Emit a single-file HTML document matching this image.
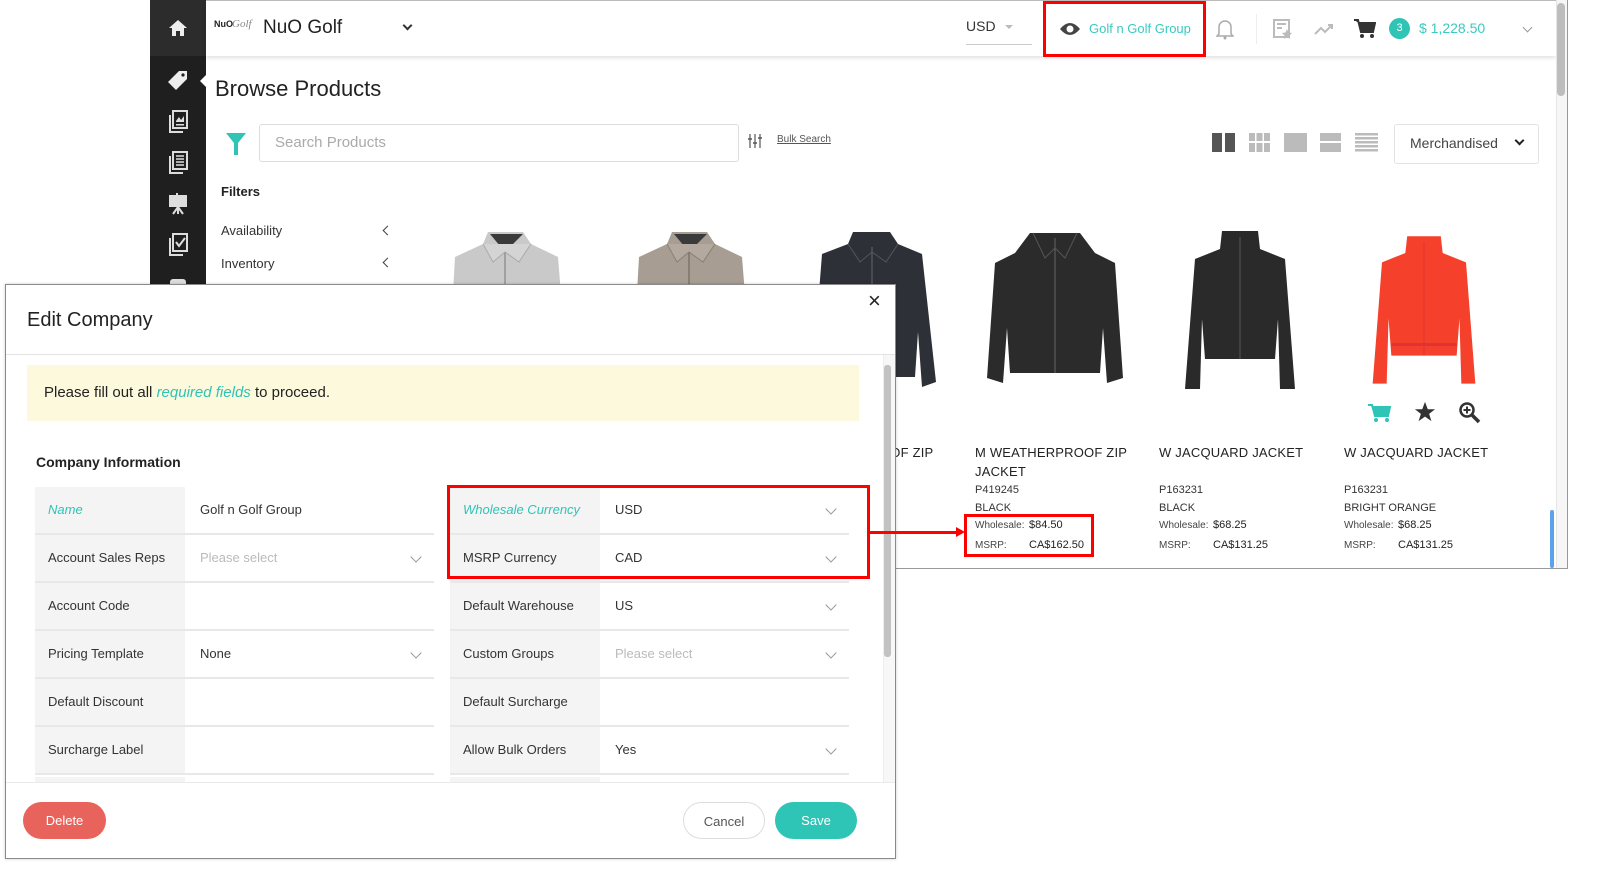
<!DOCTYPE html>
<html><head><meta charset="utf-8"><style>
*{box-sizing:border-box;margin:0;padding:0}
body{width:1600px;height:880px;background:#fff;font-family:"Liberation Sans",sans-serif;position:relative;overflow:hidden;color:#222}
.abs{position:absolute}
.side{left:150px;top:0;width:56px;height:568px;background:#1f1f1f}
.sidetop{left:150px;top:0;width:56px;height:56px;background:#2c2c2c}
.hdr{left:206px;top:0;width:1350px;height:56px;background:#fff;box-shadow:0 2px 4px rgba(0,0,0,.12);border-top:1px solid #bbb}
.t{position:absolute;white-space:nowrap}
.pt{font-size:13px;color:#222;letter-spacing:.2px}
.sm{font-size:10px;color:#444}
.row{position:absolute;height:48px;border-bottom:2px solid #e8e8e8}
.lab{position:absolute;left:0;top:0;width:150px;height:46px;background:#f4f4f4;font-size:13px;color:#333;padding-left:13px;line-height:46px}
.val{position:absolute;left:165px;top:0;font-size:13px;color:#333;line-height:46px}
.chev{position:absolute;right:14px;top:18px;width:8px;height:8px;border-right:1.3px solid #999;border-bottom:1.3px solid #999;transform:rotate(45deg)}
.ph{color:#bbb}
</style></head><body>
<div class="abs side"></div>
<div class="abs sidetop"></div>
<svg class="abs" style="left:168px;top:18px" width="20" height="20" viewBox="0 0 20 20"><path d="M10 2 L19 10 H16 V18 H12 V13 H8 V18 H4 V10 H1 Z" fill="#eee"/></svg>
<div class="abs" style="left:200px;top:74px;width:0;height:0;border-top:7px solid transparent;border-bottom:7px solid transparent;border-right:7px solid #fff"></div>
<svg class="abs" style="left:167px;top:69px" width="22" height="22" viewBox="0 0 22 22"><path d="M12 2 H20 V10 L9 21 L1 13 Z" fill="#eee"/><circle cx="16" cy="6" r="1.6" fill="#1f1f1f"/></svg>
<svg class="abs" style="left:167px;top:110px" width="22" height="24" viewBox="0 0 22 24"><rect x="6" y="1" width="14" height="17" fill="none" stroke="#ddd" stroke-width="2"/><path d="M3 5 V22 H16" fill="none" stroke="#ddd" stroke-width="2"/><path d="M9 11 L12 7 L14 10 L17 6 V12 H9Z" fill="#ddd"/><rect x="9" y="14" width="8" height="1.5" fill="#ddd"/></svg>
<svg class="abs" style="left:167px;top:151px" width="22" height="24" viewBox="0 0 22 24"><rect x="6" y="1" width="14" height="17" fill="none" stroke="#ddd" stroke-width="2"/><path d="M3 5 V22 H16" fill="none" stroke="#ddd" stroke-width="2"/><path d="M9 5h8M9 8h8M9 11h8M9 14h8" stroke="#ddd" stroke-width="1.5"/></svg>
<svg class="abs" style="left:167px;top:193px" width="22" height="22" viewBox="0 0 22 22"><rect x="2" y="2" width="18" height="12" fill="#ddd"/><path d="M11 14 L6 21 M11 14 L16 21 M11 14 V21 M10 0 V2" stroke="#ddd" stroke-width="2"/></svg>
<svg class="abs" style="left:167px;top:233px" width="22" height="24" viewBox="0 0 22 24"><rect x="6" y="1" width="14" height="17" fill="none" stroke="#ddd" stroke-width="2"/><path d="M3 5 V22 H16" fill="none" stroke="#ddd" stroke-width="2"/><path d="M9 9 L12 13 L18 5" fill="none" stroke="#ddd" stroke-width="2"/></svg>
<div class="abs" style="left:170px;top:279px;width:16px;height:6px;background:#ddd;border-radius:3px 3px 0 0"></div>

<div class="abs hdr"></div>
<div class="t" style="left:214px;top:19px;font-size:9px;font-weight:bold">NuO</div>
<div class="t" style="left:232px;top:18px;font-size:11px;font-style:italic;color:#888;font-family:'Liberation Serif',serif">Golf</div>
<div class="t" style="left:263px;top:17px;font-size:19px;color:#222">NuO Golf</div>
<div class="abs" style="left:404px;top:22px;width:7px;height:7px;border-right:2px solid #333;border-bottom:2px solid #333;transform:rotate(45deg)"></div>
<div class="t" style="left:966px;top:18px;font-size:14px;color:#333">USD</div>
<div class="abs" style="left:1005px;top:25px;border-left:4px solid transparent;border-right:4px solid transparent;border-top:4px solid #bbb"></div>
<div class="abs" style="left:966px;top:44px;width:66px;height:1px;background:#ccc"></div>
<div class="abs" style="left:1043px;top:1px;width:163px;height:56px;border:3px solid #f00"></div>
<svg class="abs" style="left:1059px;top:21px" width="22" height="16" viewBox="0 0 22 16"><path d="M1 8 Q11 -4 21 8 Q11 20 1 8Z" fill="#444"/><circle cx="11" cy="8" r="3.5" fill="#fff"/></svg>
<div class="t" style="left:1089px;top:21px;font-size:13px;color:#3cc9c0">Golf n Golf Group</div>
<svg class="abs" style="left:1216px;top:18px" width="18" height="22" viewBox="0 0 18 22"><path d="M3 16 V9 A6 6 0 0 1 15 9 V16 L17 18 H1 Z" fill="none" stroke="#aaa" stroke-width="1.5"/><circle cx="9" cy="20" r="1.5" fill="#aaa"/></svg>
<div class="abs" style="left:1256px;top:14px;width:1px;height:30px;background:#eee"></div>
<svg class="abs" style="left:1273px;top:19px" width="20" height="20" viewBox="0 0 20 20"><rect x="1" y="1" width="15" height="17" fill="none" stroke="#bbb" stroke-width="2"/><path d="M4 5h9M4 9h5" stroke="#bbb" stroke-width="2"/><path d="M14 10 L15.5 13.5 L19 14 L16.5 16.5 L17 20 L14 18 L11 20 L11.5 16.5 L9 14 L12.5 13.5Z" fill="#bbb"/></svg>
<svg class="abs" style="left:1314px;top:22px" width="20" height="14" viewBox="0 0 20 14"><path d="M1 12 L7 6 L11 10 L18 3 M14 3 H18 V7" fill="none" stroke="#bbb" stroke-width="2"/></svg>
<svg class="abs" style="left:1354px;top:18px" width="22" height="22" viewBox="0 0 22 22"><path d="M0 2 H4 L7 14 H19 L21 5 H5" fill="#333" stroke="#333" stroke-width="2"/><circle cx="8" cy="18" r="2" fill="#333"/><circle cx="18" cy="18" r="2" fill="#333"/></svg>
<div class="abs" style="left:1389px;top:18px;width:21px;height:21px;border-radius:50%;background:#2ec4b6;color:#fff;font-size:11px;text-align:center;line-height:21px">3</div>
<div class="t" style="left:1419px;top:20px;font-size:14px;color:#3cc9c0">$ 1,228.50</div>
<div class="abs" style="left:1524px;top:24px;width:7px;height:7px;border-right:1.3px solid #999;border-bottom:1.3px solid #999;transform:rotate(45deg)"></div>
<div class="abs" style="left:1556px;top:0;width:12px;height:568px;background:#f6f6f6;border-left:1px solid #e6e6e6"></div>
<div class="abs" style="left:1557px;top:3px;width:8px;height:93px;background:#bdbdbd;border-radius:4px"></div>
<div class="abs" style="left:1550px;top:510px;width:4px;height:58px;background:#5aa2ea;border-radius:2px"></div>
<div class="abs" style="left:1567px;top:0;width:1px;height:568px;background:#999"></div>
<div class="abs" style="left:895px;top:568px;width:673px;height:1px;background:#999"></div>

<div class="t" style="left:215px;top:76px;font-size:22px;color:#222">Browse Products</div>
<svg class="abs" style="left:225px;top:132px" width="22" height="24" viewBox="0 0 22 24"><path d="M1 1 H21 L13 11 V23 H9 V11 Z" fill="#2ec4b6"/></svg>
<div class="abs" style="left:259px;top:124px;width:480px;height:38px;border:1px solid #ddd;border-radius:3px"></div>
<div class="t" style="left:275px;top:134px;font-size:15px;color:#aaa">Search Products</div>
<svg class="abs" style="left:748px;top:134px" width="14" height="14" viewBox="0 0 14 14"><path d="M2 0V14M7 0V14M12 0V14" stroke="#555" stroke-width="1.2"/><path d="M0 5h4M5 9h4M10 4h4" stroke="#555" stroke-width="1.5"/></svg>
<div class="t" style="left:777px;top:134px;font-size:10px;color:#555;text-decoration:underline">Bulk Search</div>
<div class="abs" style="left:1212px;top:133px;width:10px;height:19px;background:#555"></div>
<div class="abs" style="left:1225px;top:133px;width:10px;height:19px;background:#555"></div>
<svg class="abs" style="left:1249px;top:133px" width="21" height="19"><g fill="#bbb"><rect x="0" y="0" width="6" height="8"/><rect x="7.5" y="0" width="6" height="8"/><rect x="15" y="0" width="6" height="8"/><rect x="0" y="10" width="6" height="9"/><rect x="7.5" y="10" width="6" height="9"/><rect x="15" y="10" width="6" height="9"/></g></svg>
<div class="abs" style="left:1284px;top:133px;width:23px;height:19px;background:#bbb"></div>
<div class="abs" style="left:1320px;top:133px;width:21px;height:8px;background:#bbb"></div>
<div class="abs" style="left:1320px;top:143px;width:21px;height:9px;background:#bbb"></div>
<svg class="abs" style="left:1355px;top:133px" width="23" height="19"><g fill="#bbb"><rect y="0" width="23" height="2.5"/><rect y="4" width="23" height="2.5"/><rect y="8" width="23" height="2.5"/><rect y="12" width="23" height="2.5"/><rect y="16" width="23" height="2.5"/></g></svg>
<div class="abs" style="left:1394px;top:124px;width:145px;height:40px;border:1px solid #e2e2e2;border-radius:3px"></div>
<div class="t" style="left:1410px;top:135px;font-size:14px;color:#444">Merchandised</div>
<div class="abs" style="left:1516px;top:137px;width:7px;height:7px;border-right:2px solid #222;border-bottom:2px solid #222;transform:rotate(45deg)"></div>

<div class="t" style="left:221px;top:184px;font-size:13px;color:#222;font-weight:bold">Filters</div>
<div class="t" style="left:221px;top:223px;font-size:13px;color:#333">Availability</div>
<div class="t" style="left:221px;top:256px;font-size:13px;color:#333">Inventory</div>
<div class="abs" style="left:384px;top:227px;width:7px;height:7px;border-left:1.5px solid #444;border-bottom:1.5px solid #444;transform:rotate(45deg)"></div>
<div class="abs" style="left:384px;top:259px;width:7px;height:7px;border-left:1.5px solid #444;border-bottom:1.5px solid #444;transform:rotate(45deg)"></div>

<svg class="abs" style="left:443px;top:232px" width="130" height="160" viewBox="0 0 130 160"><path d="M45 0 L80 0 L88 12 L115 25 L125 150 H5 L12 25 L40 12Z" fill="#c9c9c9"/><path d="M62 15 V160" stroke="#777"/><path d="M47 2 L62 20 L80 2Z" fill="#3a3a3a"/><path d="M40 12 L50 30 L62 20 L76 30 L88 12" fill="#d4d4d4" stroke="#aaa"/></svg>
<svg class="abs" style="left:627px;top:232px" width="130" height="160" viewBox="0 0 130 160"><path d="M45 0 L80 0 L88 12 L115 25 L125 150 H5 L12 25 L40 12Z" fill="#a79d92"/><path d="M62 15 V160" stroke="#6b5f50"/><path d="M47 2 L62 20 L80 2Z" fill="#3a3a3a"/><path d="M40 12 L50 30 L62 20 L76 30 L88 12" fill="#b3a99e" stroke="#8a7f72"/></svg>
<svg class="abs" style="left:810px;top:232px" width="128" height="160" viewBox="0 0 128 160"><path d="M43 0 L80 0 L88 12 L112 22 L126 150 L112 155 L108 100 L105 145 L20 145 L18 100 L14 155 L2 150 L12 22 L38 12Z" fill="#2e3038"/><path d="M62 15 V145" stroke="#666"/><path d="M38 12 L50 30 L62 20 L76 30 L88 12" fill="none" stroke="#555"/></svg>
<svg class="abs" style="left:985px;top:228px" width="140" height="160" viewBox="0 0 140 160"><path d="M45 5 L95 5 L110 25 L130 35 L138 150 L122 155 L118 100 L115 145 L25 145 L22 100 L18 155 L2 150 L10 35 L30 25Z" fill="#2b2b2b"/><path d="M70 10 V145" stroke="#666"/><path d="M48 5 L60 30 L70 20 L80 30 L92 5" fill="none" stroke="#555"/></svg>
<svg class="abs" style="left:1180px;top:228px" width="120" height="162" viewBox="0 0 120 160"><path d="M42 2 L78 2 L80 20 L105 30 L115 160 L100 160 L98 90 L95 130 L25 130 L22 90 L20 160 L5 160 L15 30 L40 20Z" fill="#2a2a2a"/><path d="M60 8 V130" stroke="#555"/></svg>
<svg class="abs" style="left:1368px;top:228px" width="112" height="162" viewBox="0 0 120 160"><path d="M42 2 L78 2 L80 20 L105 30 L115 160 L100 160 L98 90 L95 130 L25 130 L22 90 L20 160 L5 160 L15 30 L40 20Z" fill="#f5412c"/><path d="M60 8 V130" stroke="#d33"/><path d="M25 118 H95" stroke="#d33" stroke-width="3"/></svg>
<svg class="abs" style="left:1368px;top:403px" width="24" height="20" viewBox="0 0 24 20"><path d="M0 2 H4 L7 13 H20 L22 4 H5" fill="#2ec4b6" stroke="#2ec4b6" stroke-width="2"/><circle cx="8" cy="17" r="2" fill="#2ec4b6"/><circle cx="19" cy="17" r="2" fill="#2ec4b6"/></svg>
<svg class="abs" style="left:1413px;top:401px" width="24" height="22" viewBox="0 0 24 24"><path d="M12 1 L15 9 H23 L16.5 14 L19 22 L12 17 L5 22 L7.5 14 L1 9 H9Z" fill="#333"/></svg>
<svg class="abs" style="left:1459px;top:402px" width="22" height="22" viewBox="0 0 22 22"><circle cx="8" cy="8" r="6.5" fill="none" stroke="#333" stroke-width="2.5"/><path d="M13 13 L20 20" stroke="#333" stroke-width="3.5"/><path d="M8 4.5V11.5M4.5 8H11.5" stroke="#333" stroke-width="2"/></svg>

<div class="t pt" style="left:880px;top:445px">OOF ZIP</div>
<div class="t pt" style="left:975px;top:445px">M WEATHERPROOF ZIP</div>
<div class="t pt" style="left:975px;top:464px">JACKET</div>
<div class="t" style="left:975px;top:484px;font-size:11px;color:#333">P419245</div>
<div class="t" style="left:975px;top:502px;font-size:11px;color:#333">BLACK</div>
<div class="t sm" style="left:975px;top:520px">Wholesale:</div><div class="t" style="left:1029px;top:519px;font-size:11px;color:#222">$84.50</div>
<div class="t sm" style="left:975px;top:540px">MSRP:</div><div class="t" style="left:1029px;top:539px;font-size:11px;color:#222">CA$162.50</div>
<div class="t pt" style="left:1159px;top:445px">W JACQUARD JACKET</div>
<div class="t" style="left:1159px;top:484px;font-size:11px;color:#333">P163231</div>
<div class="t" style="left:1159px;top:502px;font-size:11px;color:#333">BLACK</div>
<div class="t sm" style="left:1159px;top:520px">Wholesale:</div><div class="t" style="left:1213px;top:519px;font-size:11px;color:#222">$68.25</div>
<div class="t sm" style="left:1159px;top:540px">MSRP:</div><div class="t" style="left:1213px;top:539px;font-size:11px;color:#222">CA$131.25</div>
<div class="t pt" style="left:1344px;top:445px">W JACQUARD JACKET</div>
<div class="t" style="left:1344px;top:484px;font-size:11px;color:#333">P163231</div>
<div class="t" style="left:1344px;top:502px;font-size:11px;color:#333">BRIGHT ORANGE</div>
<div class="t sm" style="left:1344px;top:520px">Wholesale:</div><div class="t" style="left:1398px;top:519px;font-size:11px;color:#222">$68.25</div>
<div class="t sm" style="left:1344px;top:540px">MSRP:</div><div class="t" style="left:1398px;top:539px;font-size:11px;color:#222">CA$131.25</div>
<div class="abs" style="left:964px;top:514px;width:130px;height:43px;border:3px solid #f00"></div>

<div class="abs" style="left:5px;top:284px;width:891px;height:575px;background:#fff;border:1px solid #8a8a8a;box-shadow:0 0 3px rgba(0,0,0,.2)"></div>
<div class="t" style="left:27px;top:309px;font-size:20px;color:#222">Edit Company</div>
<div class="t" style="left:868px;top:288px;font-size:22px;color:#222">×</div>
<div class="abs" style="left:6px;top:354px;width:889px;height:1px;background:#e3e3e3"></div>
<div class="abs" style="left:883px;top:355px;width:12px;height:428px;background:#f7f7f7;border-left:1px solid #eee"></div>
<div class="abs" style="left:884px;top:365px;width:7px;height:292px;background:#c2c2c2;border-radius:3px"></div>
<div class="abs" style="left:27px;top:365px;width:832px;height:56px;background:#fdf9dc"></div>
<div class="t" style="left:44px;top:384px;font-size:15px;color:#222">Please fill out all <i style="color:#2ec4b6">required fields</i> to proceed.</div>
<div class="t" style="left:36px;top:454px;font-size:14px;color:#222;font-weight:bold">Company Information</div>

<div style="position:absolute;left:35px;top:487px;width:399px">
<div class="row" style="top:0;width:399px"><div class="lab" style="color:#2ec4b6;font-style:italic">Name</div><div class="val">Golf n Golf Group</div></div>
<div class="row" style="top:48px;width:399px"><div class="lab">Account Sales Reps</div><div class="val ph">Please select</div><div class="chev"></div></div>
<div class="row" style="top:96px;width:399px"><div class="lab">Account Code</div></div>
<div class="row" style="top:144px;width:399px"><div class="lab">Pricing Template</div><div class="val">None</div><div class="chev"></div></div>
<div class="row" style="top:192px;width:399px"><div class="lab">Default Discount</div></div>
<div class="row" style="top:240px;width:399px"><div class="lab">Surcharge Label</div></div>
<div class="abs" style="top:290px;left:0;width:150px;height:6px;background:#f4f4f4"></div>
</div>
<div style="position:absolute;left:450px;top:487px;width:399px">
<div class="row" style="top:0;width:399px"><div class="lab" style="color:#2ec4b6;font-style:italic">Wholesale Currency</div><div class="val">USD</div><div class="chev"></div></div>
<div class="row" style="top:48px;width:399px"><div class="lab">MSRP Currency</div><div class="val">CAD</div><div class="chev"></div></div>
<div class="row" style="top:96px;width:399px"><div class="lab">Default Warehouse</div><div class="val">US</div><div class="chev"></div></div>
<div class="row" style="top:144px;width:399px"><div class="lab">Custom Groups</div><div class="val ph">Please select</div><div class="chev"></div></div>
<div class="row" style="top:192px;width:399px"><div class="lab">Default Surcharge</div></div>
<div class="row" style="top:240px;width:399px"><div class="lab">Allow Bulk Orders</div><div class="val">Yes</div><div class="chev"></div></div>
<div class="abs" style="top:290px;left:0;width:150px;height:6px;background:#f4f4f4"></div>
</div>
<div class="abs" style="left:447px;top:485px;width:423px;height:94px;border:3px solid #f00"></div>
<div class="abs" style="left:870px;top:531px;width:88px;height:3px;background:#f00"></div>
<div class="abs" style="left:956px;top:527px;border-top:5px solid transparent;border-bottom:5px solid transparent;border-left:9px solid #f00"></div>

<div class="abs" style="left:6px;top:782px;width:889px;height:1px;background:#eaeaea"></div>
<div class="abs" style="left:23px;top:802px;width:83px;height:37px;border-radius:19px;background:#e8635b;color:#fff;font-size:13px;text-align:center;line-height:37px">Delete</div>
<div class="abs" style="left:683px;top:802px;width:82px;height:37px;border-radius:19px;border:1px solid #ddd;color:#555;font-size:13px;text-align:center;line-height:37px">Cancel</div>
<div class="abs" style="left:775px;top:802px;width:82px;height:37px;border-radius:19px;background:#2ec4b6;color:#fff;font-size:13px;text-align:center;line-height:37px">Save</div>
</body></html>
